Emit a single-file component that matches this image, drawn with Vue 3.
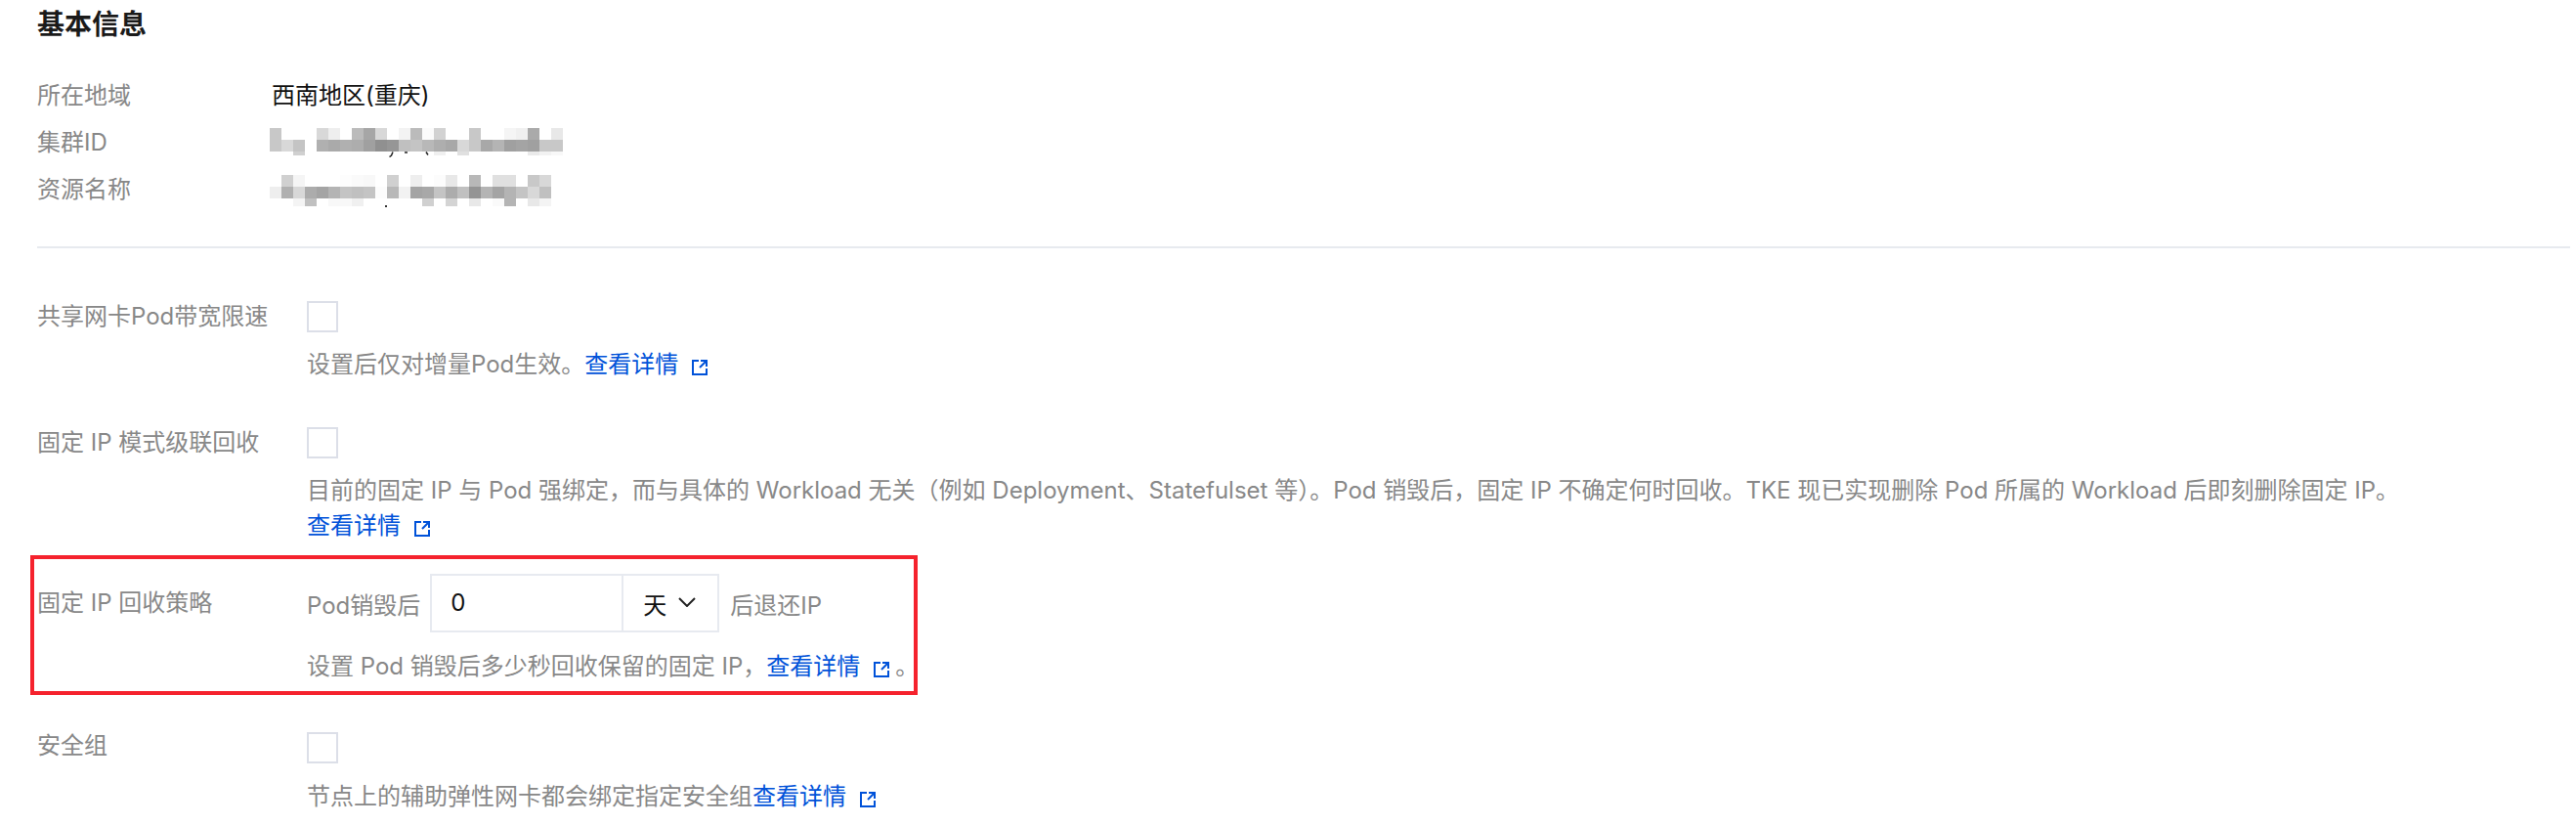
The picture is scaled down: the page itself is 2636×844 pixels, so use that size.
<script setup>
const hex = (s) => s.split(' ').map((v) => (v === '-' ? 'transparent' : '#' + v + v.slice(0, 2) + v.slice(0, 2)))

const clusterBlur = [
  hex('c8 - - - d8 ee - bb a6 d8 - f3 bb fb d2 - - c8 - - f5 f0 aa - e8'),
  hex('c8 d8 c4 - b0 aa b0 ad a0 90 96 c0 c4 b8 ae a8 d8 c8 a8 b4 a0 a4 a0 c8 c8'),
  hex('- - d0 - - - - - - - - - - - f0 - e0 - - - - - ea f2 f8')
].flat()

const nameBlur = [
  hex('- d0 f5 - - - fd fa f8 - d0 - ee - fc e8 - b8 - e0 e0 - c8 d8'),
  hex('ee b0 d8 ac a4 b4 c4 c0 c4 fc b8 f2 a4 a8 c4 ac c0 94 b4 a4 b4 c4 d8 c0'),
  hex('- - f4 c0 - f8 f8 f0 - - - - - d0 - d4 - e8 - fa b4 - e8 f4')
].flat()
</script>

<template>
  <main class="page">
    <h2 class="title">基本信息</h2>

    <section class="info">
      <div class="info-row">
        <span class="info-label">所在地域</span>
        <span class="info-value">西南地区(重庆)</span>
      </div>
      <div class="info-row">
        <span class="info-label">集群ID</span>
        <div class="mosaic mosaic-id">
          <i v-for="(c, i) in clusterBlur" :key="i" :style="{ background: c }"></i>
          <svg class="specks" width="50" height="6" viewBox="0 0 50 6" aria-hidden="true">
            <path d="M4 .5 2.500 4 .5 5.500M16 1h3M38 .5l2 3" />
          </svg>
        </div>
      </div>
      <div class="info-row">
        <span class="info-label">资源名称</span>
        <div class="mosaic mosaic-name">
          <i v-for="(c, i) in nameBlur" :key="i" :style="{ background: c }"></i>
          <span class="dot"></span>
        </div>
      </div>
    </section>

    <hr class="divider" />

    <section class="form">
      <div class="row row-first">
        <label class="label">共享网卡Pod带宽限速</label>
        <div class="control">
          <span class="checkbox"></span>
          <p class="desc">
            设置后仅对增量Pod生效。<a class="link">查看详情<svg class="ext" viewBox="0 0 16 16" aria-hidden="true"><path d="M7 1H1v14h14V9M8 8l6-6M9 1h6v6" /></svg></a>
          </p>
        </div>
      </div>

      <div class="row">
        <label class="label">固定 IP 模式级联回收</label>
        <div class="control">
          <span class="checkbox"></span>
          <p class="desc">目前的固定 IP 与 Pod 强绑定，而与具体的 Workload 无关（例如 Deployment、Statefulset 等）。Pod 销毁后，固定 IP 不确定何时回收。TKE 现已实现删除 Pod 所属的 Workload 后即刻删除固定 IP。</p>
          <p class="desc desc-next">
            <a class="link">查看详情<svg class="ext" viewBox="0 0 16 16" aria-hidden="true"><path d="M7 1H1v14h14V9M8 8l6-6M9 1h6v6" /></svg></a>
          </p>
        </div>
      </div>

      <div class="row row-ip">
        <div class="highlight"></div>
        <label class="label label-ip">固定 IP 回收策略</label>
        <div class="control">
          <div class="inline">
            <span class="muted">Pod销毁后</span>
            <div class="group">
              <span class="number">0</span>
              <span class="unit">
                天
                <svg class="chevron" viewBox="0 0 18 10" aria-hidden="true"><path d="M1 1l8 8 8-8" /></svg>
              </span>
            </div>
            <span class="muted">后退还IP</span>
          </div>
          <p class="desc desc-ip">
            设置 Pod 销毁后多少秒回收保留的固定 IP，<a class="link">查看详情<svg class="ext" viewBox="0 0 16 16" aria-hidden="true"><path d="M7 1H1v14h14V9M8 8l6-6M9 1h6v6" /></svg></a><span class="period">。</span>
          </p>
        </div>
      </div>

      <div class="row row-sg">
        <label class="label label-sg">安全组</label>
        <div class="control">
          <span class="checkbox"></span>
          <p class="desc desc-sg">
            节点上的辅助弹性网卡都会绑定指定安全组<a class="link">查看详情<svg class="ext" viewBox="0 0 16 16" aria-hidden="true"><path d="M7 1H1v14h14V9M8 8l6-6M9 1h6v6" /></svg></a>
          </p>
        </div>
      </div>
    </section>
  </main>
</template>

<style scoped>
.page {
  width: 2636px;
  height: 844px;
  box-sizing: border-box;
  padding: 7px 6px 0 38px;
  overflow: hidden;
  background: #fff;
  font-family: Inter, "Noto Sans CJK SC", sans-serif;
  font-size: 24px;
  color: #888;
}
.title {
  margin: 0;
  font-size: 28px;
  line-height: 36px;
  font-weight: 700;
  color: #1a1a1a;
}
.info {
  margin-top: 31px;
}
.info-row {
  display: flex;
  height: 48px;
  line-height: 48px;
}
.info-label {
  width: 241px;
  flex: none;
}
.info-value {
  margin-left: -1px;
  color: #111;
}
.mosaic {
  position: relative;
  display: grid;
  grid-auto-columns: 12px;
  margin-left: -3px;
  margin-top: 9px;
  align-self: flex-start;
}
.mosaic-id {
  grid-template-columns: repeat(25, 12px);
  grid-template-rows: 12px 12px 4px;
}
.mosaic-name {
  grid-template-columns: repeat(24, 12px);
  grid-template-rows: 12px 12px 8px;
}
.specks {
  position: absolute;
  left: 122px;
  top: 24px;
}
.specks path {
  fill: none;
  stroke: #222;
  stroke-width: 1.500;
}
.dot {
  position: absolute;
  left: 118px;
  top: 31px;
  width: 2px;
  height: 2px;
  background: #333;
}
.divider {
  margin: 34px 0 0;
  height: 2px;
  border: 0;
  background: #e7eaef;
}
.form {
  display: flex;
  flex-direction: column;
}
.row {
  position: relative;
  display: flex;
  margin-top: 46px;
}
.row-first {
  margin-top: 54px;
}
.row-ip {
  margin-top: 31px;
}
.row-sg {
  margin-top: 49px;
}
.label {
  width: 276px;
  flex: none;
  line-height: 32px;
}
.label-ip {
  line-height: 60px;
}
.label-sg {
  line-height: 27px;
}
.control {
  flex: 1;
  min-width: 0;
}
.checkbox {
  display: block;
  width: 32px;
  height: 32px;
  box-sizing: border-box;
  border: 2px solid #dcdfe8;
  background: #fff;
}
.desc {
  margin: 15px 0 0;
  line-height: 36px;
  white-space: nowrap;
}
.desc-next {
  margin-top: 0;
}
.desc-ip {
  margin-top: 17px;
}
.desc-sg {
  margin-top: 16px;
}
.link {
  color: #0052d9;
  text-decoration: none;
}
.ext {
  width: 16px;
  height: 16px;
  margin-left: 14px;
  vertical-align: -3px;
}
.ext path {
  fill: none;
  stroke: #0052d9;
  stroke-width: 2;
}
.period {
  margin-left: 6px;
}
.inline {
  display: flex;
  align-items: center;
  height: 60px;
}
.muted {
  white-space: nowrap;
}
.group {
  display: flex;
  width: 296px;
  height: 60px;
  box-sizing: border-box;
  margin: 0 11px 0 10px;
  border: 2px solid #e7eaf0;
  color: #111;
}
.number {
  width: 196px;
  flex: none;
  box-sizing: border-box;
  padding-left: 19px;
  line-height: 56px;
  border-right: 2px solid #e7eaf0;
}
.unit {
  display: flex;
  align-items: center;
  gap: 12px;
  padding-left: 20px;
}
.chevron {
  width: 18px;
  height: 10px;
  margin-top: -2px;
}
.chevron path {
  fill: none;
  stroke: #222;
  stroke-width: 2;
}
.highlight {
  position: absolute;
  left: -7px;
  top: -19px;
  width: 908px;
  height: 143px;
  box-sizing: border-box;
  border: 4px solid #f5222d;
  pointer-events: none;
}
</style>
